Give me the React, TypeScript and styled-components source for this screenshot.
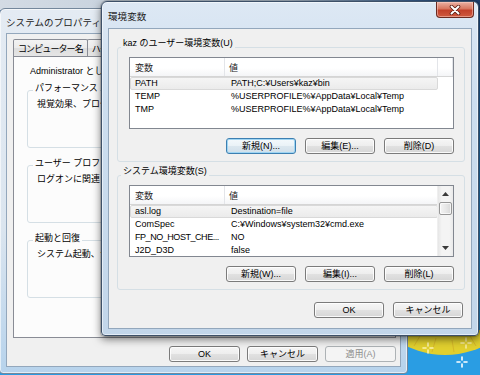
import React from 'react';
import styled, { createGlobalStyle, css } from 'styled-components';

const GlobalStyle = createGlobalStyle`
  html, body { margin: 0; padding: 0; }
  body {
    font-family: "Liberation Sans", "Noto Sans CJK JP", sans-serif;
    font-size: 9px;
    color: #000;
  }
`;

const Desktop = styled.div`
  position: relative;
  width: 480px;
  height: 375px;
  overflow: hidden;
  background:
    linear-gradient(90deg, #d3dbe4 0%, #b9c7d6 60%, #40699c 86%, #1d3d6c 100%) top left / 100% 10px no-repeat,
    linear-gradient(180deg, #23579a 0%, #2a8fd8 60%, #2a9be2 100%);
`;

const Wallpaper = styled.svg`
  position: absolute;
  left: 400px;
  top: 330px;
  z-index: 0;
`;

const Window = styled.div<{ $active?: boolean; $x: number; $y: number; $w: number; $h: number; $z: number }>`
  position: absolute;
  z-index: ${p => p.$z};
  left: ${p => p.$x}px;
  top: ${p => p.$y}px;
  width: ${p => p.$w}px;
  height: ${p => p.$h}px;
  box-sizing: border-box;
  display: flex;
  flex-direction: column;
  border: 1px solid ${p => (p.$active ? '#3d5068' : '#74879b')};
  border-radius: 6px 6px 4px 4px;
  ${p =>
    p.$active
      ? css`
          background: linear-gradient(180deg, #dde8f4 0%, #cddeef 30%, #c2d6ea 100%);
          box-shadow: inset 0 0 0 1px rgba(255, 255, 255, 0.55), 0 0 0 1px rgba(0, 0, 0, 0.15),
            0 3px 9px rgba(0, 0, 0, 0.55);
        `
      : css`
          background: linear-gradient(180deg, #e4ebf3 0%, #dbe5ef 60%, #b7d3ec 100%);
          box-shadow: inset 0 0 0 1px rgba(255, 255, 255, 0.6);
        `}
`;

const TitleBar = styled.div<{ $h: number; $top: number }>`
  height: ${p => p.$h}px;
  flex: none;
  box-sizing: border-box;
  display: flex;
  align-items: center;
  padding: ${p => p.$top}px 4px 0 6px;
  white-space: nowrap;
  overflow: visible;
`;

const TitleText = styled.span`
  font-size: 9.5px;
  color: #1a1a1a;
  letter-spacing: 0.1px;
`;

const CloseButton = styled.div`
  margin-left: auto;
  align-self: flex-start;
  margin-top: -1px;
  width: 38px;
  height: 16px;
  box-sizing: border-box;
  border: 1px solid #6b2a20;
  border-top: none;
  border-radius: 0 0 4px 4px;
  background: linear-gradient(180deg, #eab1a3 0%, #d8765f 45%, #c2402a 55%, #cf5a3f 100%);
  box-shadow: inset 0 0 0 1px rgba(255, 210, 200, 0.5);
  display: flex;
  align-items: center;
  justify-content: center;
`;

const Client = styled.div<{ $pad: string }>`
  flex: 1;
  margin: 0 6px 6px 6px;
  border: 1px solid #93a7bc;
  background: #f0f0f0;
  display: flex;
  flex-direction: column;
  padding: ${p => p.$pad};
  min-height: 0;
  overflow: hidden;
`;

/* ---------- Back window: tab control ---------- */

const TabStrip = styled.div`
  display: flex;
  height: 17px;
  flex: none;
  align-items: flex-end;
`;

const Tab = styled.div<{ $selected?: boolean }>`
  height: ${p => (p.$selected ? 19 : 17)}px;
  box-sizing: border-box;
  padding: 0 4px;
  margin-right: -1px;
  display: flex;
  align-items: center;
  white-space: nowrap;
  letter-spacing: -0.9px;
  border: 1px solid #898c95;
  border-bottom: none;
  border-radius: 2px 2px 0 0;
  background: ${p => (p.$selected ? '#fcfcfc' : 'linear-gradient(180deg, #f3f3f3 0%, #ebebeb 50%, #dedede 51%, #e5e5e5 100%)')};
`;

const TabPanel = styled.div`
  height: 282px;
  flex: none;
  box-sizing: border-box;
  border: 1px solid #898c95;
  background: #fcfcfc;
  padding: 8px 4px 0 13px;
  display: flex;
  flex-direction: column;
  white-space: nowrap;
  overflow: hidden;
`;

const Intro = styled.div`
  line-height: 12px;
  margin-left: 3px;
`;

const PanelGroup = styled.fieldset<{ $first?: boolean }>`
  margin: ${p => (p.$first ? 5 : 9)}px 0 0 0;
  height: 66px;
  box-sizing: border-box;
  min-width: 0;
  border: 1px solid #d5dfe5;
  border-radius: 3px;
  padding: 0 8px 6px 9px;
  display: flex;
  flex-direction: column;
`;

const PanelLegend = styled.legend`
  padding: 0 2px 4px;
  margin-left: -4px;
  line-height: 12px;
`;

const PanelText = styled.div`
  line-height: 12px;
`;

/* ---------- Front window: environment variables ---------- */

const Group = styled.fieldset<{ $gapTop: number }>`
  margin: ${p => p.$gapTop}px 0 0 0;
  min-width: 0;
  border: 1px solid #d5dfe5;
  border-radius: 3px;
  padding: 0 10px 7px 11px;
  display: flex;
  flex-direction: column;
`;

const GroupLegend = styled.legend`
  padding: 0 2px 8px;
  margin-left: -8px;
  line-height: 12px;
  white-space: nowrap;
`;

const ListView = styled.div`
  height: 72px;
  box-sizing: border-box;
  border: 1px solid #828790;
  background: #fff;
  display: flex;
  overflow: hidden;
`;

const ListBody = styled.div`
  flex: 1;
  min-width: 0;
  display: flex;
  flex-direction: column;
  overflow: hidden;
`;

const Header = styled.div`
  height: 19px;
  flex: none;
  display: grid;
  grid-template-columns: 95px 213px 1fr;
  background: linear-gradient(180deg, #ffffff 0%, #ffffff 55%, #f4f5f7 100%);
  border-bottom: 1px solid #d5d5d5;
  box-sizing: border-box;
`;

const HeaderCell = styled.div<{ $pad: number }>`
  display: flex;
  align-items: center;
  padding-left: ${p => p.$pad}px;
  border-right: 1px solid #e3e5e9;
  color: #222;
  white-space: nowrap;
  overflow: hidden;
`;

const Row = styled.div<{ $selected?: boolean }>`
  height: 13px;
  flex: none;
  width: 308px;
  box-sizing: border-box;
  display: grid;
  grid-template-columns: 95px 213px;
  align-items: center;
  border: 1px solid transparent;
  border-radius: 2px;
  ${p =>
    p.$selected &&
    css`
      background: linear-gradient(180deg, #f5f5f5 0%, #ebebeb 100%);
      border-color: #d9d9d9;
    `}
`;

const Cell = styled.div<{ $pad: number; $tight?: boolean }>`
  padding-left: ${p => p.$pad}px;
  white-space: nowrap;
  overflow: hidden;
  line-height: 11px;
  letter-spacing: ${p => (p.$tight ? '-0.45px' : 'normal')};
`;

const ScrollBar = styled.div`
  width: 15px;
  flex: none;
  display: flex;
  flex-direction: column;
  background: linear-gradient(90deg, #e6e6e6 0%, #f4f4f4 25%, #f4f4f4 75%, #eaeaea 100%);
  border-left: 1px solid #efefef;
`;

const ScrollArrow = styled.div`
  height: 16px;
  flex: none;
  display: flex;
  align-items: center;
  justify-content: center;
`;

const ScrollThumb = styled.div`
  height: 13px;
  flex: none;
  margin: 0 1px;
  box-sizing: border-box;
  border: 1px solid #979797;
  border-radius: 2px;
  background: linear-gradient(90deg, #f4f4f4 0%, #e8e8e8 50%, #d9d9d9 100%);
  box-shadow: inset 0 0 0 1px rgba(255, 255, 255, 0.7);
`;

const ScrollTrack = styled.div`
  flex: 1;
`;

const ButtonRow = styled.div<{ $top: number; $gap: number; $right?: number }>`
  display: flex;
  justify-content: flex-end;
  gap: ${p => p.$gap}px;
  margin-top: ${p => p.$top}px;
  margin-right: ${p => p.$right ?? 0}px;
  flex: none;
`;

const Button = styled.button<{ $w?: number; $default?: boolean }>`
  width: ${p => p.$w ?? 70}px;
  height: 16px;
  box-sizing: border-box;
  padding: 0;
  margin: 0;
  font-family: inherit;
  font-size: 9px;
  line-height: 12px;
  color: #000;
  white-space: nowrap;
  border: 1px solid #7b7b7b;
  border-radius: 3px;
  background: linear-gradient(180deg, #f6f6f6 0%, #eeeeee 48%, #e1e1e1 52%, #d6d6d6 100%);
  box-shadow: inset 0 0 0 1px rgba(255, 255, 255, 0.85);
  ${p =>
    p.$default &&
    css`
      border-color: #3c7fb1;
      background: linear-gradient(180deg, #f4f9fc 0%, #eaf2f7 48%, #dbe7ef 52%, #d0dfea 100%);
      box-shadow: inset 0 0 0 1px #9fd5f3;
    `}
  &:disabled {
    color: #8d8d8d;
    border-color: #adb2b5;
    background: #f4f4f4;
    box-shadow: none;
  }
`;

const Arrow = ({ down }: { down?: boolean }) => (
  <svg width="7" height="4" viewBox="0 0 7 4">
    <path d={down ? 'M0 0 L7 0 L3.5 4 Z' : 'M0 4 L7 4 L3.5 0 Z'} fill="#3a3a3a" />
  </svg>
);

const Sparkle = ({ x, y, color }: { x: number; y: number; color: string }) => (
  <g stroke={color} strokeWidth="1.6" strokeLinecap="round">
    <line x1={x - 5} y1={y} x2={x - 2} y2={y} />
    <line x1={x + 2} y1={y} x2={x + 5} y2={y} />
    <line x1={x} y1={y - 5} x2={x} y2={y - 2} />
    <line x1={x} y1={y + 2} x2={x} y2={y + 5} />
  </g>
);

type Var = { name: string; value: string; tight?: boolean };

const userVars: Var[] = [
  { name: 'PATH', value: 'PATH;C:¥Users¥kaz¥bin' },
  { name: 'TEMP', value: '%USERPROFILE%¥AppData¥Local¥Temp' },
  { name: 'TMP', value: '%USERPROFILE%¥AppData¥Local¥Temp' },
];

const systemVars: Var[] = [
  { name: 'asl.log', value: 'Destination=file' },
  { name: 'ComSpec', value: 'C:¥Windows¥system32¥cmd.exe' },
  { name: 'FP_NO_HOST_CHE...', value: 'NO', tight: true },
  { name: 'J2D_D3D', value: 'false' },
];

const VarList = ({ vars, scroll }: { vars: Var[]; scroll?: boolean }) => (
  <ListView>
    <ListBody>
      <Header>
        <HeaderCell $pad={5}>変数</HeaderCell>
        <HeaderCell $pad={4}>値</HeaderCell>
        <HeaderCell $pad={0} />
      </Header>
      {vars.map((v, i) => (
        <Row key={v.name} $selected={i === 0}>
          <Cell $pad={4} $tight={v.tight}>
            {v.name}
          </Cell>
          <Cell $pad={5}>{v.value}</Cell>
        </Row>
      ))}
    </ListBody>
    {scroll && (
      <ScrollBar>
        <ScrollArrow>
          <Arrow />
        </ScrollArrow>
        <ScrollThumb />
        <ScrollTrack />
        <ScrollArrow>
          <Arrow down />
        </ScrollArrow>
      </ScrollBar>
    )}
  </ListView>
);

const tabs = ['コンピューター名', 'ハードウェア', '詳細設定', 'システムの保護', 'リモート'];

export default function App() {
  return (
    <>
      <GlobalStyle />
      <Desktop>
        <Wallpaper width="80" height="45" viewBox="0 0 80 45">
          <rect x="0" y="0" width="80" height="45" fill="#2a9de3" />
          <ellipse cx="45" cy="-30" rx="70" ry="55" fill="#e0cf2e" />
          <g stroke="#cfa524" strokeWidth="0.8" opacity="0.7">
            <line x1="20" y1="6" x2="14" y2="16" />
            <line x1="36" y1="8" x2="32" y2="22" />
            <line x1="52" y1="10" x2="54" y2="22" />
            <line x1="70" y1="6" x2="76" y2="16" />
          </g>
          <Sparkle x={28} y={18} color="#fbf3b0" />
          <Sparkle x={66} y={13} color="#f7eca0" />
          <Sparkle x={62} y={32} color="#ffffff" />
        </Wallpaper>

        <Window $z={1} $x={-1} $y={8} $w={409} $h={366}>
          <TitleBar $h={24} $top={2}>
            <TitleText>システムのプロパティ</TitleText>
          </TitleBar>
          <Client $pad="5px 4px 4px 6px">
            <TabStrip>
              {tabs.map(t => (
                <Tab key={t} $selected={t === '詳細設定'}>
                  {t}
                </Tab>
              ))}
            </TabStrip>
            <TabPanel>
              <Intro>Administrator としてログオンしない場合は、これらのほとんどは変更できません。</Intro>
              <PanelGroup $first>
                <PanelLegend>パフォーマンス</PanelLegend>
                <PanelText>視覚効果、プロセッサのスケジュール、メモリ使用、および仮想メモリ</PanelText>
              </PanelGroup>
              <PanelGroup>
                <PanelLegend>ユーザー プロファイル</PanelLegend>
                <PanelText>ログオンに関連したデスクトップ設定</PanelText>
              </PanelGroup>
              <PanelGroup>
                <PanelLegend>起動と回復</PanelLegend>
                <PanelText>システム起動、システム障害、およびデバッグ情報</PanelText>
              </PanelGroup>
            </TabPanel>
            <ButtonRow $top={8} $gap={7}>
              <Button $w={71}>OK</Button>
              <Button $w={71}>キャンセル</Button>
              <Button $w={71} disabled>
                適用(A)
              </Button>
            </ButtonRow>
          </Client>
        </Window>

        <Window $z={2} $active $x={101} $y={1} $w={378} $h={335}>
          <TitleBar $h={26} $top={1}>
            <TitleText>環境変数</TitleText>
            <CloseButton>
              <svg width="12" height="10" viewBox="0 0 12 10">
                <path d="M2.5 1.5 L9.5 8.5 M9.5 1.5 L2.5 8.5" stroke="#5b1d12" strokeWidth="3.6" strokeLinecap="round" />
                <path d="M2.5 1.5 L9.5 8.5 M9.5 1.5 L2.5 8.5" stroke="#ffffff" strokeWidth="2" strokeLinecap="round" />
              </svg>
            </CloseButton>
          </TitleBar>
          <Client $pad="8px 6px 0 8px">
            <Group $gapTop={0}>
              <GroupLegend>kaz のユーザー環境変数(U)</GroupLegend>
              <VarList vars={userVars} />
              <ButtonRow $top={9} $gap={9}>
                <Button $default>新規(N)...</Button>
                <Button>編集(E)...</Button>
                <Button>削除(D)</Button>
              </ButtonRow>
            </Group>
            <Group $gapTop={3}>
              <GroupLegend>システム環境変数(S)</GroupLegend>
              <VarList vars={systemVars} scroll />
              <ButtonRow $top={9} $gap={9}>
                <Button>新規(W)...</Button>
                <Button>編集(I)...</Button>
                <Button>削除(L)</Button>
              </ButtonRow>
            </Group>
            <ButtonRow $top={12} $gap={9} $right={2}>
              <Button>OK</Button>
              <Button>キャンセル</Button>
            </ButtonRow>
          </Client>
        </Window>
      </Desktop>
    </>
  );
}
